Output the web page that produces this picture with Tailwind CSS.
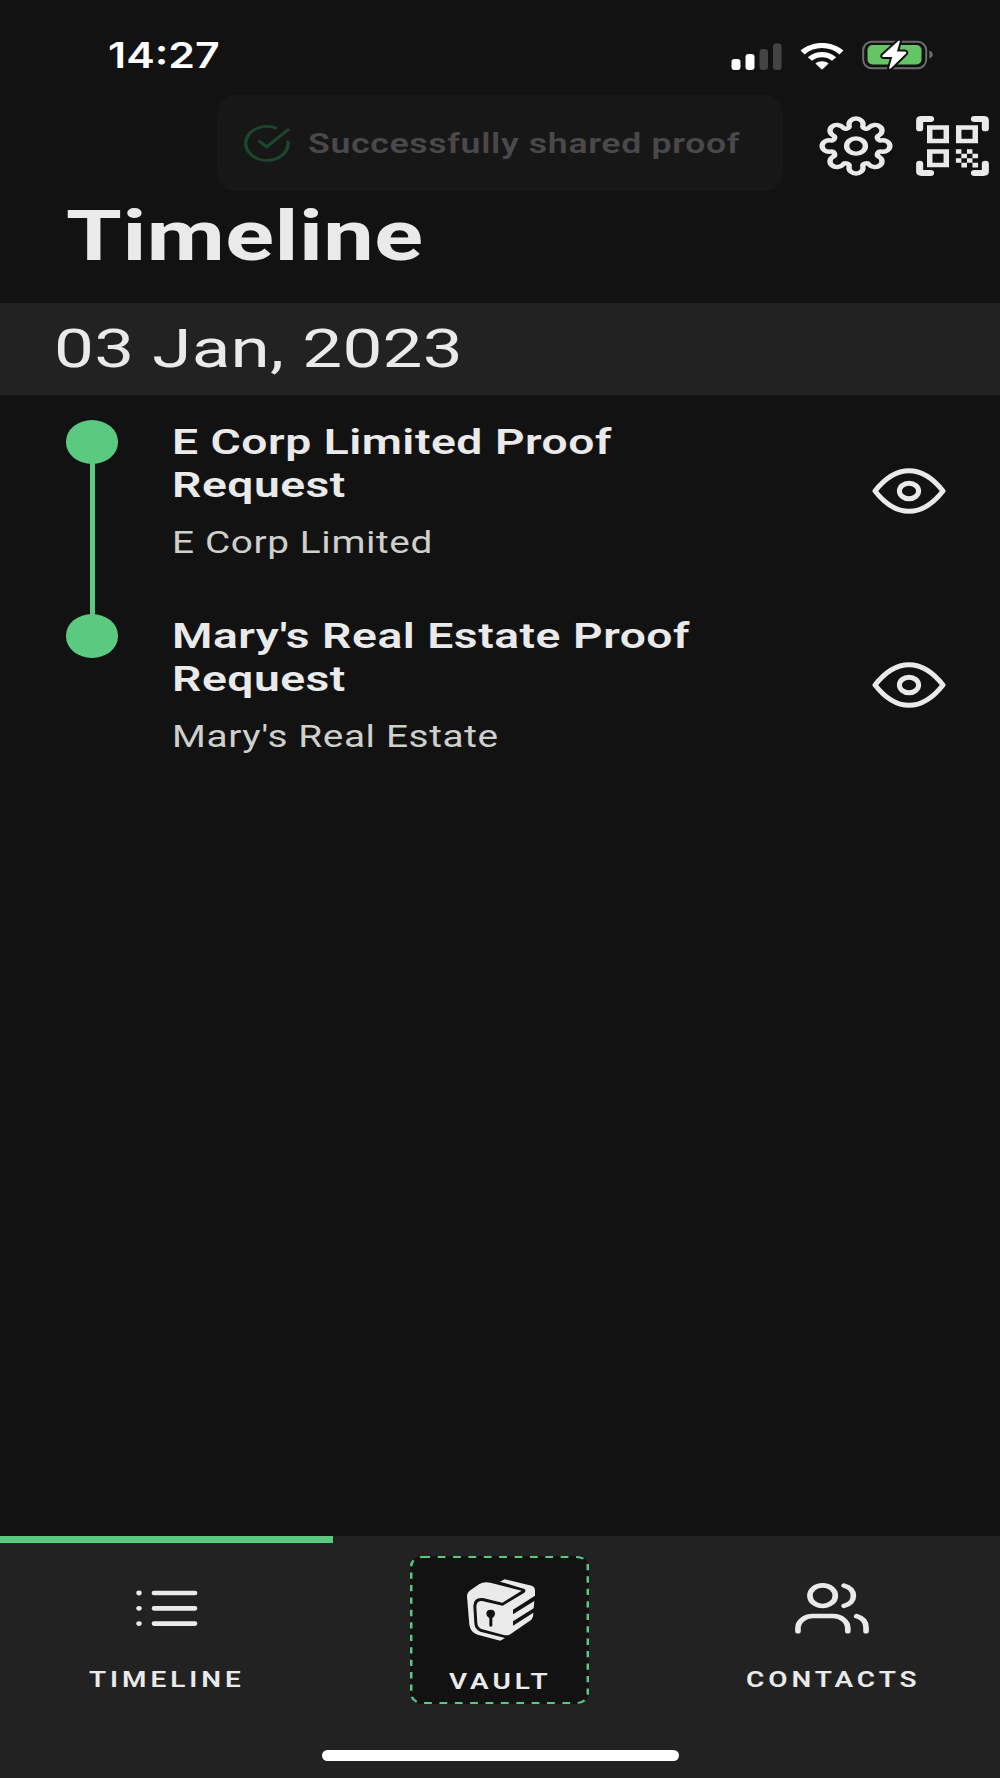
<!DOCTYPE html>
<html lang="en">
<head>
    <meta charset="UTF-8">
    <meta name="viewport" content="width=device-width, initial-scale=1.0">
    <title>Timeline</title>
    <script src="https://cdn.jsdelivr.net/npm/@tailwindcss/browser@4"></script>
</head>
<body class="bg-[#121212]">
    <div class="w-[1000px] h-[1778px] flex flex-col overflow-hidden bg-[#121212] text-[#eaeaea] font-['Roboto',sans-serif] whitespace-nowrap">

        <!-- Status bar -->
        <div class="h-[95px] shrink-0 flex items-start pt-[30px] pl-[108px] pr-[67px] text-white">
            <span class="block origin-left scale-x-[1.225] font-['Inter',sans-serif] font-semibold text-[35px] leading-[50px]">14:27</span>
            <div class="ml-auto flex items-end pt-[10px]">
                <svg class="w-[51px] h-[28px] mr-[18px]" viewBox="0 0 51 28">
                    <rect x="0.5" y="17" width="9" height="11" rx="3" fill="#fff"/>
                    <rect x="14.5" y="12" width="9" height="16" rx="3" fill="#fff"/>
                    <rect x="28.5" y="7" width="8.5" height="21" rx="3" fill="#444"/>
                    <rect x="42" y="1.5" width="8.5" height="26.5" rx="3" fill="#444"/>
                </svg>
                <svg class="w-[44px] h-[28px] mr-[18px]" viewBox="0 0 44 28" fill="#fff">
                    <path d="M0.6 8.6C12-1.6 32-1.6 43.4 8.6L39.4 12.4C29.5 4 14.5 4 4.6 12.4Z"/>
                    <path d="M7.8 15.2C16 8.2 28 8.2 36.2 15.2L32 18.8C26 14.2 18 14.2 12 18.8Z"/>
                    <path d="M15.4 21.6C19 18.4 25 18.4 28.6 21.6L22.8 27Q22 27.8 21.2 27Z"/>
                </svg>
                <svg class="w-[71px] h-[30px]" viewBox="0 0 71 30">
                    <rect x="1.2" y="1.7" width="63" height="26.6" rx="8.5" fill="none" stroke="#6c6c6c" stroke-width="2"/>
                    <path d="M67.3 10.5Q70.8 12 70.8 14.5T67.3 18.5Z" fill="#6c6c6c"/>
                    <rect x="5.5" y="5" width="54" height="19.5" rx="5" fill="#65c466"/>
                    <path d="M36.6 0.8L20.5 15.2Q19.6 17.1 22 17.1H30.2L27 28.6H28.6L44 13.6Q44.8 11.6 42.4 11.6H35L38 0.8Z" fill="#fff" stroke="#121212" stroke-width="4" stroke-linejoin="round" paint-order="stroke"/>
                </svg>
            </div>
        </div>

        <!-- Toast and header actions -->
        <div class="h-[96px] shrink-0 flex items-center pl-[217px]">
            <div class="w-[566px] h-[96px] shrink-0 rounded-[18px] bg-[#171717] flex items-center pl-[27px]">
                <svg class="w-[46px] h-[37px] mr-[18px]" viewBox="0 0 37 37" preserveAspectRatio="none" fill="none" stroke="#1d4630" stroke-width="2.8" stroke-linecap="round">
                    <path d="M35.4 17V18.5A17 17 0 1 1 25.5 3"/>
                    <path d="M35.4 4.8L18.3 21.8L12.6 16.5"/>
                </svg>
                <span class="block pt-px origin-left scale-x-[1.32] tracking-[0.5px] font-semibold text-[27px] leading-[40px] text-[#494949]">Successfully shared proof</span>
            </div>
            <svg class="w-[74px] h-[60px] shrink-0 ml-[36px] mt-[6px]" viewBox="-37 -37 74 74" preserveAspectRatio="none" fill="none" stroke="#eaeaea" stroke-width="5.4">
                <path d="M-6.89 -25.63A7 7 0 1 1 6.89 -25.63A3.5 3.5 0 0 0 13.25 -23A7 7 0 1 1 23 -13.25A3.5 3.5 0 0 0 25.63 -6.89A7 7 0 1 1 25.63 6.89A3.5 3.5 0 0 0 23 13.25A7 7 0 1 1 13.25 23A3.5 3.5 0 0 0 6.89 25.63A7 7 0 1 1 -6.89 25.63A3.5 3.5 0 0 0 -13.25 23A7 7 0 1 1 -23 13.25A3.5 3.5 0 0 0 -25.63 6.89A7 7 0 1 1 -25.63 -6.89A3.5 3.5 0 0 0 -23 -13.25A7 7 0 1 1 -13.25 -23A3.5 3.5 0 0 0 -6.89 -25.63Z"/>
                <circle r="9.4"/>
            </svg>
            <svg class="w-[73px] h-[60px] shrink-0 ml-[23px] mt-[5px]" viewBox="0 0 60 60" preserveAspectRatio="none" fill="none" stroke="#eaeaea">
                <path d="M3 12.4V4.5Q3 3 4.5 3H12M48 3H55.5Q57 3 57 4.5V12.4M57 47.6V55.5Q57 57 55.5 57H48M12 57H4.5Q3 57 3 55.5V47.6" stroke-width="5.8" stroke-linecap="round"/>
                <path d="M11.3 11.5H24.9V24.9H11.3ZM35.1 11.5H48.7V24.9H35.1ZM11.3 35.5H24.9V48.9H11.3Z" stroke-width="4.5"/>
                <path d="M32.8 33.2h4.5v4.6h4.6v-4.6h4.5v4.6h4.6v4.5h-4.6v4.5h4.6v4.6h-4.6v-4.6h-4.5v4.6h-4.6v-4.6h-4.5v-4.5h4.5v-4.5h-4.5ZM37.3 42.3v4.5h4.6v-4.5h4.5v-4.5h-4.5v4.5Z" fill="#eaeaea" fill-rule="evenodd" stroke="none"/>
            </svg>
        </div>

        <h1 class="h-[112px] shrink-0 pl-[66px]">
            <span class="block origin-left scale-x-[1.27] tracking-[0.4px] font-bold text-[71px] leading-[89px]">Timeline</span>
        </h1>

        <div class="h-[92px] shrink-0 pl-[54px] bg-[#222]">
            <span class="block origin-left scale-x-[1.34] tracking-[0.2px] text-[53px] leading-[93px]">03 Jan, 2023</span>
        </div>

        <!-- Events -->
        <div class="grow pt-[25px]">
            <div class="flex h-[194px]">
                <div class="w-[53px] ml-[65.5px] flex flex-col items-center shrink-0">
                    <div class="w-[52.5px] h-[43.5px] shrink-0 rounded-[50%] bg-[#5cc980]"></div>
                    <div class="w-[5px] h-[152px] -my-px shrink-0 bg-[#5cc980]"></div>
                </div>
                <div class="w-[660px] ml-[53.5px] pt-px shrink-0">
                    <h2 class="origin-left scale-x-[1.32] tracking-[0.4px] font-semibold text-[35px] leading-[43px]">E Corp Limited Proof<br>Request</h2>
                    <p class="origin-left scale-x-[1.25] tracking-[0.5px] mt-[16px] text-[31px] leading-[40px] text-[#cfcfcb]">E Corp Limited</p>
                </div>
                <svg class="w-[74px] h-[46px] mt-[48px] ml-[40px] shrink-0" viewBox="0 0 74 46" fill="none" stroke="#eaeaea" stroke-width="5">
                    <path d="M3 23C12 11.5 23 2.7 37 2.7S62 11.5 71 23C62 34.5 51 43.3 37 43.3S12 34.5 3 23Z" stroke-linejoin="round"/>
                    <ellipse cx="37" cy="23" rx="9.6" ry="7.8"/>
                </svg>
            </div>
            <div class="flex h-[194px]">
                <div class="w-[53px] ml-[65.5px] shrink-0">
                    <div class="w-[52.5px] h-[43.5px] rounded-[50%] bg-[#5cc980]"></div>
                </div>
                <div class="w-[660px] ml-[53.5px] pt-px shrink-0">
                    <h2 class="origin-left scale-x-[1.32] tracking-[0.4px] font-semibold text-[35px] leading-[43px]">Mary's Real Estate Proof<br>Request</h2>
                    <p class="origin-left scale-x-[1.25] tracking-[0.5px] mt-[16px] text-[31px] leading-[40px] text-[#cfcfcb]">Mary's Real Estate</p>
                </div>
                <svg class="w-[74px] h-[46px] mt-[48px] ml-[40px] shrink-0" viewBox="0 0 74 46" fill="none" stroke="#eaeaea" stroke-width="5">
                    <path d="M3 23C12 11.5 23 2.7 37 2.7S62 11.5 71 23C62 34.5 51 43.3 37 43.3S12 34.5 3 23Z" stroke-linejoin="round"/>
                    <ellipse cx="37" cy="23" rx="9.6" ry="7.8"/>
                </svg>
            </div>
        </div>

        <!-- Tab bar -->
        <div class="h-[242px] shrink-0 flex flex-col bg-[#222]">
            <div class="w-[333px] h-[7px] shrink-0 bg-[#5cc980]"></div>
            <div class="flex h-[207px] font-semibold text-[22px] leading-[30px]">
                <div class="w-[333px] pt-[47px]">
                    <svg class="w-[62px] h-[37px] ml-[135.5px]" viewBox="0 0 62 37" fill="#eaeaea" stroke="#eaeaea" stroke-width="4.7" stroke-linecap="round">
                        <path d="M18 3H59M18 18.3H59M18 33.6H59"/>
                        <g stroke="none">
                            <ellipse cx="3" cy="3" rx="2.7" ry="2.4"/>
                            <ellipse cx="3" cy="18.3" rx="2.7" ry="2.4"/>
                            <ellipse cx="3" cy="33.6" rx="2.7" ry="2.4"/>
                        </g>
                    </svg>
                    <span class="block w-0 ml-[89px] mt-[38px] origin-left scale-x-[1.27] tracking-[3.1px]">TIMELINE</span>
                </div>
                <div class="relative w-[179px] h-[148px] ml-[77px] mt-[13px] rounded-[12px] bg-[#121212] pt-[23px]">
                    <svg class="absolute inset-0 w-[179px] h-[148px]" viewBox="0 0 145 148" preserveAspectRatio="none">
                        <rect x="1" y="1" width="143" height="146" rx="9" fill="none" stroke="#5cc980" stroke-width="2" stroke-dasharray="6.3 6.15"/>
                    </svg>
                    <svg class="w-[68px] h-[62px] ml-[56.5px]" viewBox="230 118 204 186" fill="#eaeaea">
                        <path d="M230 170Q230 159 240 152L266 134Q280 125 300 129L394 153L336 189L278 175Q250 172 249 198L252 250Q253 270 270 276L344 295L330 303L262 285Q240 278 237 255Z"/>
                        <path d="M329 126L343 119L424 138Q434 141 434 153V168L368 210V224L432 184L430 206L368 245V258L429 219Q430 233 423 240L361 283Q352 289 340 286L276 269Q262 265 261 250L258 202Q258 182 275 184L337 198L402 159Q410 151 400 147Z"/>
                        <path d="M297 236Q288 231 288 222Q288 210 301 210T314 222Q314 231 306 236V258Q301 264 297 258Z" fill="#121212"/>
                    </svg>
                    <span class="block w-0 ml-[39px] mt-[26px] origin-left scale-x-[1.27] tracking-[3.1px]">VAULT</span>
                </div>
                <div class="ml-[158px] pt-[40px]">
                    <svg class="w-[74px] h-[51px] ml-[48px]" viewBox="0 0 60 51" preserveAspectRatio="none" fill="none" stroke="#eaeaea" stroke-width="4.6" stroke-linecap="round">
                        <circle cx="22.4" cy="12.7" r="10.3"/>
                        <path d="M2.4 48.2V45A12 12 0 0 1 14.4 33H30.8A12 12 0 0 1 42.8 45V48.2"/>
                        <path d="M39.8 2.6A10.6 10.6 0 0 1 39.8 22.9"/>
                        <path d="M50 33.2Q57.6 36 57.6 44.5V48.2"/>
                    </svg>
                    <span class="block w-0 mt-[31px] -ml-px origin-left scale-x-[1.27] tracking-[3.1px]">CONTACTS</span>
                </div>
            </div>
            <div class="w-[357px] h-[11px] ml-[322px] rounded-full bg-white"></div>
        </div>
    </div>
</body>
</html>
